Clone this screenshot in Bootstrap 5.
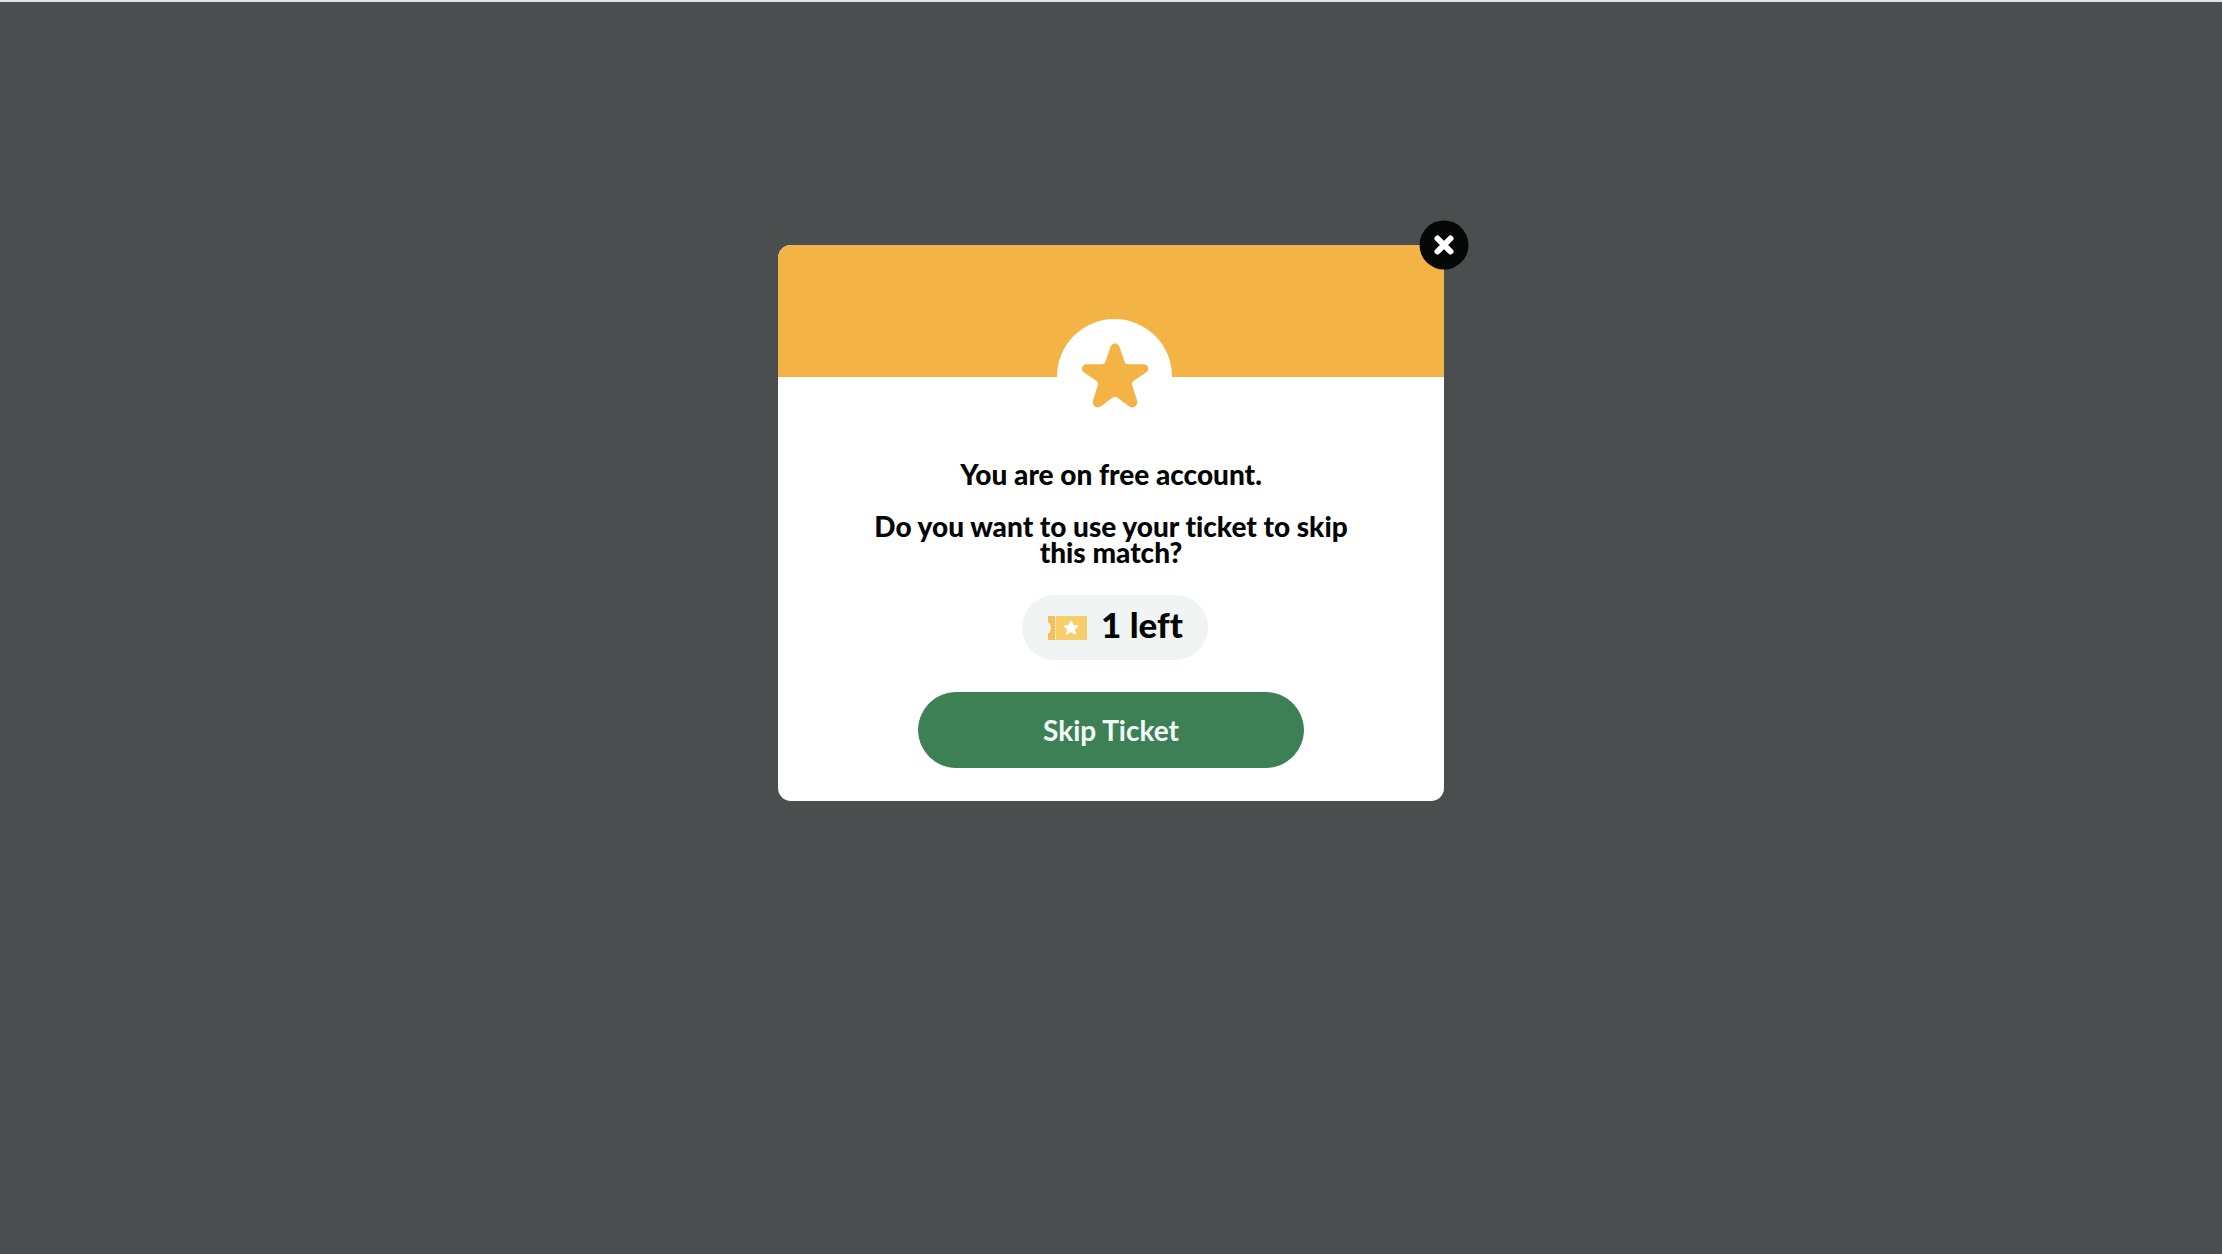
<!DOCTYPE html>
<html lang="en">
<head>
<meta charset="utf-8">
<meta name="viewport" content="width=device-width, initial-scale=1">
<title>Skip Ticket</title>
<link href="https://cdn.jsdelivr.net/npm/bootstrap@5.3.0/dist/css/bootstrap.min.css" rel="stylesheet">
<style>
  body { background: #4a4e4e; border-top: 2px solid #dde4e7; font-family: Lato, "Open Sans", sans-serif; font-variant-ligatures: none; color: #050606; }
  .ticket-area { padding-top: 243px; }
  .ticket-dialog { width: 100%; max-width: 666px; border-radius: 13px; }
  .dialog-banner { height: 132px; background: #f4b445; border-radius: 13px 13px 0 0; }
  .star-disc { width: 115px; height: 115px; margin: 0 0 -57px 6px; }
  .dialog-content { padding: 84px 80px 33px; }
  .dialog-copy { font-size: 28px; line-height: 26px; font-weight: 900; }
  .copy-gap { margin-bottom: 26px; }
  .count-pill { height: 65px; padding: 0 25px; gap: 14px; margin: 30px 0 32px 8px; background: #f0f4f3; font-size: 35px; line-height: 40px; font-weight: 900; }
  .skip-btn { width: 386px; max-width: 100%; height: 76px; font-size: 28px; line-height: 32px; font-weight: 700; --bs-btn-color: #f5fdf8; --bs-btn-bg: #3e8056; --bs-btn-border-color: #3e8056; --bs-btn-hover-color: #fff; --bs-btn-hover-bg: #336c48; --bs-btn-hover-border-color: #336c48; }
  .close-dot { width: 49px; height: 49px; --bs-btn-bg: #060808; --bs-btn-hover-bg: #222; }
</style>
</head>
<body class="min-vh-100">
<main class="ticket-area d-flex justify-content-center">
  <section class="ticket-dialog bg-white position-relative" role="dialog" aria-label="Skip ticket">
    <button type="button" class="close-dot btn rounded-circle border-0 p-0 d-flex position-absolute top-0 start-100 translate-middle" aria-label="Close">
      <svg width="49" height="49" viewBox="0 0 49 49" stroke="#fff" stroke-width="6" stroke-linecap="round"><path d="M18 18 31 31M31 18 18 31"/></svg>
    </button>
    <div class="dialog-banner d-flex justify-content-center align-items-end">
      <div class="star-disc bg-white rounded-circle">
        <svg class="d-block" width="115" height="115" viewBox="81 56 345 345" fill="#f4b445" aria-hidden="true"><path d="M242 138Q255 119 268 138L283 183Q286 192 295 192L342 192Q355 194 355 206Q355 211 349 216L309 243Q304 248 307 256L321 300Q324 312 315 319Q306 324 297 318L261 291Q255 287 249 291L213 318Q204 324 195 319Q186 312 189 300L203 256Q206 248 201 243L161 216Q155 211 156 206Q156 194 168 192L215 192Q224 192 227 183Z"/></svg>
      </div>
    </div>
    <div class="dialog-content d-flex flex-column align-items-center text-center">
      <p class="dialog-copy copy-gap">You are on free account.</p>
      <p class="dialog-copy mb-0">Do you want to use your ticket to skip this match?</p>
      <div class="count-pill d-flex align-items-center rounded-pill">
        <svg width="40" height="24" viewBox="0 0 40 24" aria-hidden="true"><path fill="#f8cd6c" d="M1 0H40V24H1V18Q4 16 4 12T1 6Z"/><path fill="#f3c05c" d="M1 0H8V24H1V18Q4 16 4 12T1 6Z"/><path stroke="#fdf3da" stroke-dasharray="2 1" d="M8.500 0V24"/><path fill="#fff" stroke="#fff" stroke-width="2" stroke-linejoin="round" d="M24 6 25.800 10 30 10.300 26.800 13 28 17.500 24 15 20 17.500 21.200 13 18 10.300 22.200 10Z"/></svg>
        <span class="pb-2">1 left</span>
      </div>
      <button type="button" class="skip-btn btn rounded-pill">Skip Ticket</button>
    </div>
  </section>
</main>
<script src="https://cdn.jsdelivr.net/npm/bootstrap@5.3.0/dist/js/bootstrap.bundle.min.js"></script>
</body>
</html>
